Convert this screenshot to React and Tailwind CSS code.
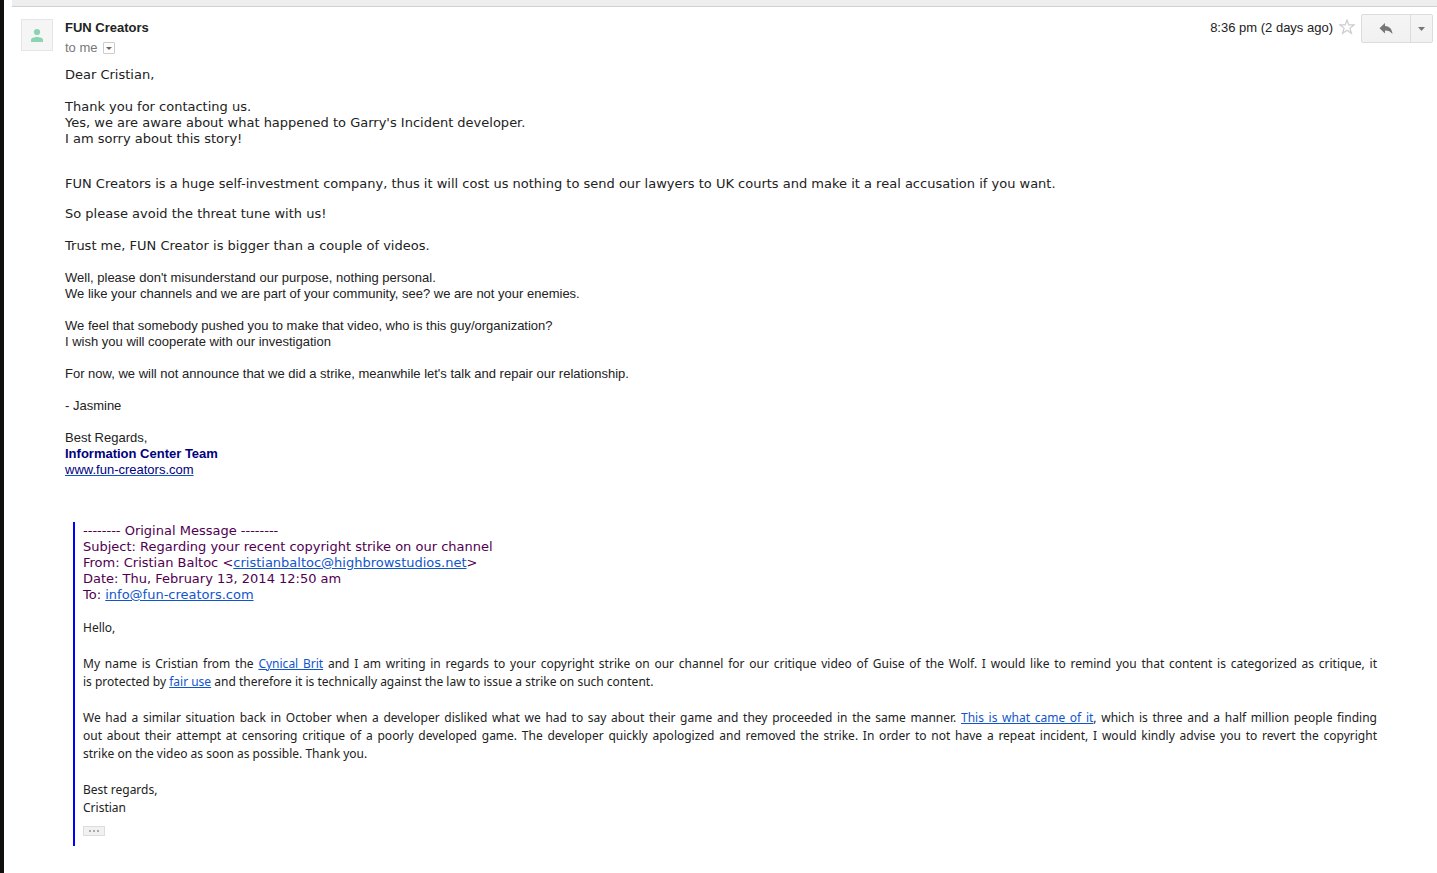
const linkClass = "text-[#1155cc] underline"

function Avatar() {
  return (
    <div className="w-8 h-8 shrink-0 border border-[#e5e5e5] bg-[#f5f5f5]">
      <svg viewBox="0 0 30 30" className="block w-full h-full" fill="#8ad3b3" aria-hidden="true">
        <circle cx="15" cy="12" r="3.100" />
        <path d="M9 22v-2.200c0-2 3.600-2.900 6-2.900s6 .9 6 2.900V22z" />
      </svg>
    </div>
  )
}

function MessageHeader() {
  return (
    <header className="flex items-start pl-[17px] pr-1 pt-[7px] font-['Liberation_Sans',Arial,sans-serif] text-[13px] leading-5">
      <div className="pt-[5px]">
        <Avatar />
      </div>
      <div className="ml-3 grow pt-1">
        <h1 className="font-bold text-[#222222]">FUN Creators</h1>
        <div className="flex items-center gap-[5px] text-[#777777]">
          <span>to me</span>
          <button
            type="button"
            aria-label="Show details"
            className="flex h-3 w-3 items-center justify-center rounded-[1px] border border-[#cccccc]"
          >
            <svg width="6" height="3" viewBox="0 0 6 3" fill="#666666">
              <path d="M0 0h6L3 3z" />
            </svg>
          </button>
        </div>
      </div>
      <time className="pt-1 text-[#222222]">8:36 pm (2 days ago)</time>
      <button type="button" aria-label="Star" className="ml-[6px] mt-[5px]">
        <svg width="16" height="16" viewBox="0 0 16 16" fill="none" stroke="#cccccc" strokeWidth="1.200">
          <path d="M8 1L9.800 5.900h5.200l-4.100 3.200 1.500 5.200L8 11.200l-4.400 3.100 1.500-5.200L1 5.900h5.200z" />
        </svg>
      </button>
      <div className="ml-[6px] flex h-[29px] rounded-[2px] border border-[#dcdcdc] bg-linear-to-b from-[#f5f5f5] to-[#f1f1f1]">
        <button type="button" aria-label="Reply" className="flex w-12 items-center justify-center">
          <svg width="14" height="12" viewBox="0 0 14 12" fill="#777777">
            <path d="M6 0v3c4 .2 7 2.500 7.500 8C11.500 8.500 9.500 7.500 6 7.500v3L.5 5.200z" />
          </svg>
        </button>
        <button
          type="button"
          aria-label="More"
          className="flex w-[22px] items-center justify-center border-l border-[#dcdcdc]"
        >
          <svg width="7" height="4" viewBox="0 0 7 4" fill="#777777">
            <path d="M0 0h7L3.500 4z" />
          </svg>
        </button>
      </div>
    </header>
  )
}

function MessageBody() {
  return (
    <div className="text-[13px] leading-4 text-[#222222]">
      <div className="font-['DejaVu_Sans',Verdana,sans-serif]">
        <p>Dear Cristian,</p>
        <p className="mt-4">
          Thank you for contacting us.
          <br />
          Yes, we are aware about what happened to Garry's Incident developer.
          <br />
          I am sorry about this story!
        </p>
        <p className="mt-[29px]">
          FUN Creators is a huge self-investment company, thus it will cost us nothing to send our lawyers to UK
          courts and make it a real accusation if you want.
        </p>
        <p className="mt-[14px]">So please avoid the threat tune with us!</p>
        <p className="mt-4">Trust me, FUN Creator is bigger than a couple of videos.</p>
      </div>

      <div className="mt-4 space-y-4 font-['Liberation_Sans',Arial,sans-serif]">
        <p>
          Well, please don't misunderstand our purpose, nothing personal.
          <br />
          We like your channels and we are part of your community, see? we are not your enemies.
        </p>
        <p>
          We feel that somebody pushed you to make that video, who is this guy/organization?
          <br />
          I wish you will cooperate with our investigation
        </p>
        <p>For now, we will not announce that we did a strike, meanwhile let's talk and repair our relationship.</p>
        <p>- Jasmine</p>
        <p>
          Best Regards,
          <br />
          <strong className="font-bold text-[#000080]">Information Center Team</strong>
          <br />
          <a href="#site" className="text-[#000080] underline decoration-[#1155cc]">
            www.fun-creators.com
          </a>
        </p>
      </div>
    </div>
  )
}

function OriginalMessage() {
  return (
    <blockquote className="ml-2 mt-11 border-l-2 border-[#0000ff] pb-[10px] pl-2 pt-px text-[13px]">
      <div className="font-['DejaVu_Sans',Verdana,sans-serif] leading-4 text-[#500050]">
        <p>-------- Original Message --------</p>
        <p>Subject: Regarding your recent copyright strike on our channel</p>
        <p>
          From: Cristian Baltoc &lt;
          <a href="#cristian" className={linkClass}>
            cristianbaltoc@highbrowstudios.net
          </a>
          &gt;
        </p>
        <p>Date: Thu, February 13, 2014 12:50 am</p>
        <p>
          To:{" "}
          <a href="#info" className={linkClass}>
            info@fun-creators.com
          </a>
        </p>
      </div>

      <div className="mt-4 mr-12 space-y-[18px] text-justify font-['Noto_Sans','Trebuchet_MS',sans-serif] text-[12px] leading-[18px] text-[#222222]">
        <p>Hello,</p>
        <p>
          My name is Cristian from the{" "}
          <a href="#cynicalbrit" className={linkClass}>
            Cynical Brit
          </a>{" "}
          and I am writing in regards to your copyright strike on our channel for our critique video of Guise of the
          Wolf. I would like to remind you that content is categorized as critique, it is&nbsp;protected by{" "}
          <a href="#fairuse" className={linkClass}>
            fair use
          </a>{" "}
          and therefore it is technically against the law to issue a strike on such content.
        </p>
        <p>
          We had a similar situation back in October when a developer disliked what we had to say about their game and
          they proceeded in the same manner.{" "}
          <a href="#october" className={linkClass}>
            This is what came of it
          </a>
          , which is three and a half million people finding out&nbsp;about&nbsp;their attempt at censoring critique of
          a poorly developed game. The developer quickly apologized and removed the strike. In order to not have a
          repeat incident, I would kindly advise you to revert the copyright strike&nbsp;on&nbsp;the&nbsp;video as soon
          as possible. Thank you.
        </p>
        <p>
          Best regards,
          <br />
          Cristian
        </p>
      </div>

      <button
        type="button"
        aria-label="Show trimmed content"
        className="mt-[9px] flex h-[10px] w-[22px] items-center justify-center gap-[2px] border border-[#dddddd] bg-[#f1f1f1]"
      >
        <span className="h-[2px] w-[2px] bg-[#aaaaaa]" />
        <span className="h-[2px] w-[2px] bg-[#aaaaaa]" />
        <span className="h-[2px] w-[2px] bg-[#aaaaaa]" />
      </button>
    </blockquote>
  )
}

export default function App() {
  return (
    <main className="min-h-screen border-l-4 border-[#110f0d] bg-white">
      <div className="ml-2 h-[7px] border-b border-[#d0d0d0] bg-[#eeeeee]" />
      <MessageHeader />
      <div className="pb-4 pl-[61px] pr-3 pt-[9px]">
        <MessageBody />
        <OriginalMessage />
      </div>
    </main>
  )
}
